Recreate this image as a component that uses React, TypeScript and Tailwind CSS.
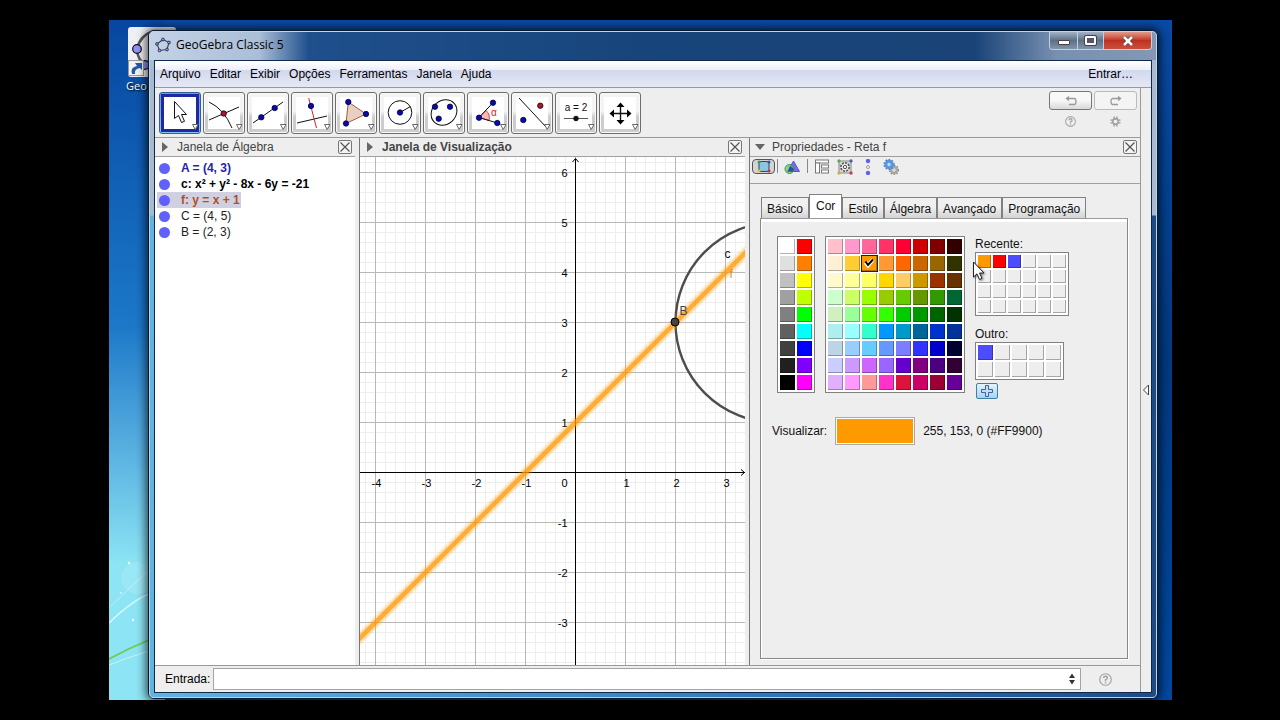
import type { ReactNode } from "react";
import clsx from "clsx";

const MENUS = ["Arquivo", "Editar", "Exibir", "Opções", "Ferramentas", "Janela", "Ajuda"];

const TABS = ["Básico", "Cor", "Estilo", "Álgebra", "Avançado", "Programação"];

const ALGEBRA = [
  { text: "A = (4, 3)", className: "font-bold text-[#2424a8]" },
  { text: "c: x² + y² - 8x - 6y = -21", className: "font-bold text-black" },
  { text: "f: y = x + 1", className: "font-bold text-[#b05020]", selected: true },
  { text: "C = (4, 5)", className: "text-[#222]" },
  { text: "B = (2, 3)", className: "text-[#222]" },
];

const BASE_COLORS = [
  "#ffffff", "#ff0000",
  "#e0e0e0", "#ff7f00",
  "#c0c0c0", "#ffff00",
  "#a0a0a0", "#bfff00",
  "#808080", "#00ff00",
  "#606060", "#00ffff",
  "#404040", "#0000ff",
  "#202020", "#7f00ff",
  "#000000", "#ff00ff",
];

const MAIN_COLORS = [
  "#ffc0cb", "#ff99cc", "#ff6699", "#ff3366", "#ff0033", "#cc0000", "#800000", "#330000",
  "#ffefd5", "#ffcc33", "#ff9900", "#ff9933", "#ff6600", "#cc6600", "#996600", "#333300",
  "#fffacd", "#ffff99", "#ffff66", "#ffd700", "#ffcc66", "#cc9900", "#993300", "#663300",
  "#ccffcc", "#ccff66", "#99ff00", "#99cc00", "#66cc00", "#669900", "#339900", "#006633",
  "#d0f0c0", "#99ff99", "#66ff00", "#33ff00", "#00cc00", "#009900", "#006400", "#003300",
  "#afeeee", "#99ffff", "#33ffcc", "#0099ff", "#0099cc", "#006699", "#0033cc", "#003399",
  "#bcd4e6", "#99ccff", "#66ccff", "#6699ff", "#7d7dff", "#3333ff", "#0000cc", "#000033",
  "#ccccff", "#cc99ff", "#cc66ff", "#9966ff", "#6600cc", "#800080", "#4b0082", "#330033",
  "#e0b0ff", "#ff99ff", "#ff9999", "#ff33cc", "#dc143c", "#cc0066", "#990033", "#660099",
];

const RECENT_COLORS = ["#ff9900", "#ff0000", "#4d4dff", ...Array(21).fill("#eeeeee")];
const OTHER_COLORS = ["#4d4dff", ...Array(9).fill("#eeeeee")];

function Dot({ x, y, color = "#0a0aa8" }: { x: number; y: number; color?: string }) {
  return <circle cx={x} cy={y} r="2.7" fill={color} stroke="#000040" strokeWidth="0.8" />;
}

const TOOLS: { name: string; icon: ReactNode }[] = [
  {
    name: "Mover",
    icon: <path d="M15.500 9.500V26.500L19.500 23.500L22.500 30.500L25.500 29.300L22.500 22.500H27.500Z" fill="#fff" />,
  },
  {
    name: "Interseção",
    icon: (
      <>
        <path d="M6 28L36 15M6 10Q21 17 29 36" />
        <Dot x={20.7} y={21.5} color="#b01818" />
      </>
    ),
  },
  {
    name: "Reta",
    icon: (
      <>
        <path d="M6 31L36 10" />
        <Dot x={14.3} y={25.3} />
        <Dot x={27.7} y={16} />
      </>
    ),
  },
  {
    name: "Reta Perpendicular",
    icon: (
      <>
        <path d="M6 31L36 24" />
        <path d="M17.700 6L25.500 36" stroke="#e02020" />
        <Dot x={20} y={14} />
      </>
    ),
  },
  {
    name: "Polígono",
    icon: (
      <>
        <path d="M13.300 10L31 22L11 31.500Z" fill="#e8cfc4" stroke="#a85a3c" />
        <Dot x={13.3} y={10} />
        <Dot x={31} y={22} />
        <Dot x={11} y={31.5} />
      </>
    ),
  },
  {
    name: "Círculo",
    icon: (
      <>
        <circle cx="21" cy="20.500" r="11.800" />
        <path d="M21 20.500L31.500 14.500" />
        <Dot x={21} y={20.5} />
      </>
    ),
  },
  {
    name: "Cônica",
    icon: (
      <>
        <ellipse cx="21" cy="20.500" rx="13.700" ry="11.800" transform="rotate(-42 21 20.500)" />
        <Dot x={12} y={14.7} />
        <Dot x={27} y={14.7} />
        <Dot x={15.7} y={26.7} />
      </>
    ),
  },
  {
    name: "Ângulo",
    icon: (
      <>
        <path d="M12 25.500L19 18.500A10 10 0 0 1 22 28.500Z" fill="#f8b8b8" stroke="#d84040" />
        <path d="M26 10.700L12 25.500L30.300 31" />
        <Dot x={12} y={25.7} />
        <Dot x={26} y={10.7} />
        <Dot x={30.3} y={31} />
        <text x="24" y="24" fontSize="10" fill="#d02020" stroke="none">α</text>
      </>
    ),
  },
  {
    name: "Reflexão",
    icon: (
      <>
        <path d="M8 6L35.500 35.500" />
        <Dot x={29.3} y={13.7} color="#b01818" />
        <Dot x={12.3} y={28} />
      </>
    ),
  },
  {
    name: "Controle Deslizante",
    icon: (
      <>
        <text x="21" y="19" fontSize="10" textAnchor="middle" fill="#111" stroke="none">a = 2</text>
        <path d="M9 26.500H33" stroke="#555" />
        <circle cx="21" cy="26.500" r="2.300" fill="#111" />
      </>
    ),
  },
  {
    name: "Mover Janela de Visualização",
    icon: (
      <>
        <path d="M13 21.500H30M21.500 13V30" strokeWidth="1.400" />
        <path
          d="M10.500 21.500L15 17.500V25.500ZM32.500 21.500L28 17.500V25.500ZM21.500 10.500L17.500 15H25.500ZM21.500 32.500L17.500 28H25.500Z"
          fill="#000"
          stroke="none"
        />
      </>
    ),
  },
];

function ToolButton({ name, icon, selected }: { name: string; icon: ReactNode; selected: boolean }) {
  return (
    <button
      type="button"
      aria-label={name}
      aria-pressed={selected}
      className={clsx(
        "h-[42px] w-[42px] rounded-[3px] border",
        selected
          ? "border-[#30609c] bg-linear-to-b from-[#6c9ccc] to-[#8ac4ee]"
          : "border-[#6e6e6e] bg-linear-to-b from-[#f4f4f4] from-45% to-[#cdcdcd] to-60% shadow-[inset_0_0_0_1px_#fafafa]"
      )}
    >
      <svg viewBox="1 1 40 40" className="block h-10 w-10" fill="none" stroke="#111" strokeWidth="1" fontFamily="Liberation Sans, sans-serif">
        {selected && <rect x="3.500" y="3.500" width="35" height="35" stroke="#2028a0" strokeWidth="3" />}
        <rect x="5" y="5" width="32" height="32" fill="#fff" stroke="none" />
        {icon}
        <path d="M33.500 32.500H39L36.200 37.500Z" fill="#fff" stroke="#666" />
      </svg>
    </button>
  );
}

function PanelHeader({ title, bold, open }: { title: string; bold?: boolean; open?: boolean }) {
  return (
    <div className="flex h-[19px] shrink-0 items-center border-b border-[#a0a0a0] bg-[#eee] pr-[3px] pl-[5px]">
      <svg viewBox="0 0 10 10" className="h-[10px] w-[10px]" fill="#666">
        {open ? <path d="M0 2H10L5 8Z" /> : <path d="M2 0L8 5L2 10Z" />}
      </svg>
      <h2 className={clsx("ml-[7px] flex-1 leading-4 text-[#444]", bold ? "font-bold" : "font-normal")}>{title}</h2>
      <button type="button" aria-label={`Fechar ${title}`} className="rounded-[2px] border border-[#777] bg-[#f4f4f4]">
        <svg viewBox="0 0 12 12" className="block h-3 w-3" stroke="#555" strokeWidth="1.200">
          <path d="M1.500 1.500L10.500 10.500M10.500 1.500L1.500 10.500" />
        </svg>
      </button>
    </div>
  );
}

function AlgebraView() {
  return (
    <section className="flex w-[204px] shrink-0 flex-col pr-1">
      <PanelHeader title="Janela de Álgebra" />
      <ul className="flex-1 bg-white pt-[3px] pl-[2px] leading-4">
        {ALGEBRA.map((row) => (
          <li key={row.text} className={clsx("flex w-fit items-center pr-px", row.selected && "bg-[#d0d0e0]")}>
            <button type="button" aria-label={`Mostrar ${row.text}`} className="mr-[11px] ml-[2px] h-[11px] w-[11px] rounded-full bg-[#6060ff]" />
            <span className={row.className}>{row.text}</span>
          </li>
        ))}
      </ul>
    </section>
  );
}

const UNIT = 50;
const OX = 215.5;
const OY = 315.5;

function GraphicsView() {
  const px = (x: number) => OX + x * UNIT;
  const py = (y: number) => OY - y * UNIT;

  return (
    <section className="flex min-w-0 flex-1 flex-col border-l border-[#777] pr-1">
      <PanelHeader title="Janela de Visualização" bold />
      <div className="relative min-h-[400px] flex-1 bg-white">
        <svg className="absolute inset-0 h-full w-full" fontFamily="Liberation Sans, sans-serif" fontSize="11">
          <defs>
            <pattern id="minor" x={OX - 0.5} y={OY - 0.5} width="10" height="10" patternUnits="userSpaceOnUse">
              <path d="M0.500 0V10M0 0.500H10" stroke="#eeeeee" />
            </pattern>
            <pattern id="major" x={OX - 0.5} y={OY - 0.5} width="50" height="50" patternUnits="userSpaceOnUse">
              <path d="M0.500 0V50M0 0.500H50" stroke="#b9b9b9" />
            </pattern>
          </defs>
          <rect width="100%" height="100%" fill="url(#minor)" />
          <rect width="100%" height="100%" fill="url(#major)" />

          <g stroke="#000" fill="none">
            <line x1="0" y1={OY} x2="100%" y2={OY} />
            <line x1={OX} y1="2" x2={OX} y2="100%" />
            <path d={`M${OX - 3} 5L${OX} 1.500L${OX + 3} 5`} />
            <svg x="100%" y={OY} overflow="visible">
              <path d="M-4 -3L-0.500 0L-4 3" />
            </svg>
          </g>

          <g textAnchor="middle">
            {[-4, -3, -2, -1, 1, 2, 3].map((n) => (
              <text key={n} x={px(n) + 1} y={OY + 14}>{n}</text>
            ))}
          </g>
          <g textAnchor="end">
            {[6, 5, 4, 3, 2, 1, -1, -2, -3].map((n) => (
              <text key={n} x={OX - 8} y={py(n) + 4}>{n}</text>
            ))}
            <text x={OX - 8} y={OY + 14}>0</text>
          </g>

          <circle cx={px(4)} cy={py(3)} r={2 * UNIT} fill="none" stroke="#4d4d4d" strokeWidth="2.400" />
          <g stroke="#ff9900">
            <line x1={px(-6)} y1={py(-5)} x2={px(16)} y2={py(17)} strokeWidth="11" opacity="0.150" />
            <line x1={px(-6)} y1={py(-5)} x2={px(16)} y2={py(17)} strokeWidth="8" opacity="0.180" />
            <line x1={px(-6)} y1={py(-5)} x2={px(16)} y2={py(17)} strokeWidth="4.500" opacity="0.700" />
          </g>
          <circle cx={px(2) - 0.5} cy={py(3) - 0.5} r="4" fill="#444" stroke="#000" />
          <g fontSize="12">
            <text x={px(2) + 4} y={py(3) - 8} fill="#444">B</text>
            <text x={px(3) - 1} y={py(4) - 15} fill="#111">c</text>
            <text x={px(3) + 4} y={py(4) + 5} fill="#e09020">f</text>
          </g>
        </svg>
      </div>
    </section>
  );
}

interface PaletteProps {
  label: string;
  colors: string[];
  columns: string;
  cell: string;
  selected?: string;
}

function Palette({ label, colors, columns, cell, selected }: PaletteProps) {
  return (
    <div role="group" aria-label={label} className={clsx("grid w-fit gap-[2px] border border-[#808080] bg-white p-[2px]", columns)}>
      {colors.map((color, i) => (
        <button
          key={i}
          type="button"
          aria-label={`${label} ${i + 1}`}
          className={clsx(
            "shadow-[inset_-1px_-1px_0_rgba(0,0,0,0.3)]",
            cell,
            color === selected && "outline outline-[#222]"
          )}
          style={{ backgroundColor: color }}
        >
          {color === selected && (
            <svg viewBox="0 0 15 15" className="block h-full w-full" fill="none">
              <path d="M3.500 6.500L6 9.500L11 3.500" stroke="#fff" strokeWidth="4" />
              <path d="M3.500 5.500L6 9L11 3.500" stroke="#000" strokeWidth="2" />
            </svg>
          )}
        </button>
      ))}
    </div>
  );
}

function PropertiesToolbar() {
  return (
    <div className="flex h-[27px] shrink-0 items-start border-b border-[#a0a0a0] pt-[2px] pl-[2px]">
      <button type="button" aria-label="Objetos" className="flex h-[15px] w-[23px] items-center justify-center rounded-[4px] border border-[#555] bg-[#d4d4d4]">
        <svg viewBox="0 0 14 13" className="h-[13px] w-[14px]">
          <rect x="2" y="1.500" width="10" height="10" rx="2" fill="#8cc4e4" stroke="#345" />
          <circle cx="2" cy="2" r="1.500" fill="#3a9a4a" />
          <circle cx="12" cy="2" r="1.500" fill="#3050b0" />
          <circle cx="2" cy="11" r="1.500" fill="#e0c030" />
          <circle cx="12" cy="11" r="1.500" fill="#c03030" />
        </svg>
      </button>
      <span className="mx-[2px] h-[14px] w-px bg-[#888]" />
      <button type="button" aria-label="Padrões" className="ml-1">
        <svg viewBox="0 0 16 16" className="block h-4 w-4">
          <path d="M9.500 2L15.500 12.500H3.500Z" fill="#7a6cf0" stroke="#5a50d8" />
          <circle cx="5.500" cy="10" r="4.500" fill="#4cb85c" fillOpacity="0.600" stroke="#3c9c4c" />
          <path d="M6 7L10 10L9 12.500H4Z" fill="#2c5098" />
        </svg>
      </button>
      <span className="mr-[7px] ml-[7px] h-[14px] w-px bg-[#888]" />
      <button type="button" aria-label="Layout">
        <svg viewBox="0 0 14 14" className="block h-[15px] w-[14px]" fill="#fff" stroke="#777">
          <rect x="0.500" y="0.500" width="13" height="3" />
          <rect x="0.500" y="3.500" width="4" height="10" />
          <rect x="6.500" y="5.500" width="7" height="3" />
          <rect x="6.500" y="10.500" width="7" height="3" />
        </svg>
      </button>
      <button type="button" aria-label="Configurações de objeto" className="ml-2">
        <svg viewBox="0 0 16 16" className="block h-4 w-4" fill="none">
          <path d="M2 2H14V14H2Z" fill="#ddd" stroke="#888" />
          <circle cx="8" cy="8" r="4.200" fill="#eee" stroke="#555" strokeWidth="1.600" strokeDasharray="2.200 1" />
          <circle cx="8" cy="8" r="1.700" stroke="#555" />
          <circle cx="2" cy="2" r="1.700" fill="#58a860" />
          <circle cx="14" cy="2" r="1.700" fill="#5060a8" />
          <circle cx="2" cy="14" r="1.700" fill="#c8b048" />
          <circle cx="14" cy="14" r="1.700" fill="#b84848" />
        </svg>
      </button>
      <button type="button" aria-label="Janela de Álgebra" className="ml-3">
        <svg viewBox="0 0 6 16" className="block h-4 w-[6px]">
          <circle cx="3" cy="2" r="2.200" fill="#6060e8" />
          <circle cx="3" cy="8" r="1.500" fill="#fff" stroke="#999" />
          <circle cx="3" cy="14" r="2.200" fill="#6060e8" />
        </svg>
      </button>
      <button type="button" aria-label="Avançado" className="ml-3">
        <svg viewBox="0 0 16 16" className="block h-4 w-4" fill="none">
          <circle cx="11" cy="11" r="3" fill="#ddd" stroke="#a8a8a8" strokeWidth="2.500" />
          <circle cx="11" cy="11" r="4.600" stroke="#8c8c8c" strokeWidth="1.200" strokeDasharray="1.500 1.500" />
          <circle cx="6" cy="5.500" r="3.200" fill="#c4dcf8" stroke="#5c96dc" strokeWidth="3" />
          <circle cx="6" cy="5.500" r="5" stroke="#4880cc" strokeWidth="1.200" strokeDasharray="1.700 1.500" />
        </svg>
      </button>
    </div>
  );
}

function PropertiesView() {
  return (
    <section className="flex w-[391px] shrink-0 flex-col border-l border-[#777]">
      <PanelHeader title="Propriedades - Reta f" open />
      <PropertiesToolbar />
      <div className="flex flex-1 flex-col pt-[10px] pr-3 pb-[6px] pl-[10px] text-[#111]">
        <div role="tablist" className="flex items-end pl-px">
          {TABS.map((tab) => (
            <button
              key={tab}
              type="button"
              role="tab"
              aria-selected={tab === "Cor"}
              className={clsx(
                "border border-b-0 border-[#808080] leading-4",
                tab === "Cor"
                  ? "bg-white px-[6px] pt-[3px] pb-1"
                  : "bg-linear-to-b from-[#f0f0f0] from-45% to-[#d4d4d4] px-[5px] pt-[3px] pb-px"
              )}
            >
              {tab}
            </button>
          ))}
        </div>
        <div className="flex-1 border border-[#888] border-t-[#999] bg-[#eee] px-4 pt-[17px] shadow-[inset_1px_3px_0_#fff,1px_1px_0_#fff]">
          <div className="flex items-start gap-[10px]">
            <Palette label="Básica" colors={BASE_COLORS} columns="grid-cols-[15px_15px]" cell="h-[15px]" />
            <Palette label="Cor" colors={MAIN_COLORS} columns="grid-cols-[repeat(8,15px)]" cell="h-[15px]" selected="#ff9900" />
            <div className="leading-4">
              <p>Recente:</p>
              <div className="relative">
                <Palette label="Recente" colors={RECENT_COLORS} columns="grid-cols-[repeat(6,13px)]" cell="h-[13px]" />
                <svg viewBox="0 0 14 20" className="absolute top-[9px] -left-[3px] h-5 w-[14px] drop-shadow-[1px_1px_1px_rgba(0,0,0,0.5)]">
                  <path d="M1.500 1V16L5 12.800L7.500 18.500L10 17.300L7.500 12H12Z" fill="#fff" stroke="#222" />
                </svg>
              </div>
              <p className="mt-[10px]">Outro:</p>
              <Palette label="Outro" colors={OTHER_COLORS} columns="grid-cols-[repeat(5,15px)]" cell="h-[15px]" />
              <button
                type="button"
                aria-label="Adicionar cor"
                className="mt-[3px] ml-px flex h-4 w-[22px] items-center justify-center rounded-[2px] border border-[#4080a8] bg-linear-to-b from-[#e4f4fd] to-[#a4d4f0]"
              >
                <svg viewBox="0 0 12 12" className="h-3 w-3">
                  <path d="M4.500 0.500H7.500V4.500H11.500V7.500H7.500V11.500H4.500V7.500H0.500V4.500H4.500Z" fill="#c4dcf4" stroke="#3c64a0" />
                </svg>
              </button>
            </div>
          </div>
          <div className="-ml-[5px] flex items-center gap-2 pt-[18px]">
            <span>Visualizar:</span>
            <span className="h-7 w-20 border border-[#aaa] bg-[#ff9900] shadow-[inset_0_0_0_1px_#fff]" />
            <span>255, 153, 0 (#FF9900)</span>
          </div>
        </div>
      </div>
    </section>
  );
}

function TitleBar() {
  return (
    <header className="flex h-7 items-start justify-between">
      <div className="flex items-center pt-[5px] pl-[5px]">
        <svg viewBox="0 0 16 16" className="h-4 w-4" fill="none" stroke="#345" strokeWidth="1.100">
          <path d="M8 2.500L14 5.500L12 12.500L4.500 13.500L2 7Z" />
          <g fill="#9898f0" stroke="#224" strokeWidth="0.800">
            <circle cx="8" cy="2.500" r="1.400" />
            <circle cx="14" cy="5.500" r="1.400" />
            <circle cx="12" cy="12.500" r="1.400" />
            <circle cx="4.500" cy="13.500" r="1.400" />
            <circle cx="2" cy="7" r="1.400" />
          </g>
        </svg>
        <h1 className="ml-[5px] font-['Open_Sans',sans-serif] text-[12px] leading-4 text-black">GeoGebra Classic 5</h1>
      </div>
      <div className="mr-1 flex h-[18px] overflow-hidden rounded-b-[4px] border border-t-0 border-[#c4d0e0]">
        <button type="button" aria-label="Minimizar" className="flex w-7 items-center justify-center border-r border-[#c4d0e0] bg-linear-to-b from-[#a4b2c4] via-[#5c7088] to-[#8094ac]">
          <span className="mt-1 h-[5px] w-3 rounded-[1px] border border-[#444] bg-white" />
        </button>
        <button type="button" aria-label="Maximizar" className="flex w-[26px] items-center justify-center border-r border-[#c4d0e0] bg-linear-to-b from-[#a4b2c4] via-[#5c7088] to-[#8094ac]">
          <span className="h-[9px] w-[11px] rounded-[1px] border-2 border-white bg-[#556] outline outline-[#444]" />
        </button>
        <button type="button" aria-label="Fechar" className="flex w-[47px] items-center justify-center bg-linear-to-b from-[#e09a8c] via-[#c03020] to-[#c85038]">
          <svg viewBox="0 0 12 10" className="h-[10px] w-3" fill="none">
            <path d="M2 1L10 9M10 1L2 9" stroke="#444" strokeWidth="4" />
            <path d="M2 1L10 9M10 1L2 9" stroke="#fff" strokeWidth="2.500" />
          </svg>
        </button>
      </div>
    </header>
  );
}

function MenuBar() {
  return (
    <nav className="flex h-[27px] shrink-0 items-center gap-[9px] border-b border-[#999] bg-[linear-gradient(to_bottom,#fff,#eef0f9_34%,#d3d9ed_36%,#e4e8f6)] pl-[5px] text-black">
      {MENUS.map((menu) => (
        <button key={menu} type="button">{menu}</button>
      ))}
      <button type="button" className="mr-[18px] ml-auto">Entrar…</button>
    </nav>
  );
}

function ToolBar() {
  return (
    <div className="flex h-[50px] shrink-0 justify-between border-b border-[#999] pt-1 pr-[3px] pl-1">
      <div className="flex gap-[2px]">
        {TOOLS.map((tool, i) => (
          <ToolButton key={tool.name} name={tool.name} icon={tool.icon} selected={i === 0} />
        ))}
      </div>
      <div className="-mt-px grid h-fit grid-cols-[43px_43px] gap-x-[2px] gap-y-1">
        <button type="button" aria-label="Desfazer" className="flex h-[19px] items-center justify-center rounded-[3px] border border-[#777] bg-linear-to-b from-[#f8f8f8] from-50% to-[#d8d8d8]">
          <svg viewBox="0 0 12 10" className="h-[10px] w-3" fill="none" stroke="#999" strokeWidth="1.300">
            <path d="M1.500 2.500H9Q11 2.500 11 5.500T9 8.500H4M4 0.500L1.500 2.500L4 4.500" />
          </svg>
        </button>
        <button type="button" aria-label="Refazer" className="flex h-[19px] items-center justify-center rounded-[3px] border border-[#bbb] bg-[#f4f4f4]">
          <svg viewBox="0 0 12 10" className="h-[10px] w-3" fill="none" stroke="#999" strokeWidth="1.300">
            <path d="M10.500 2.500H3Q1 2.500 1 5.500T3 8.500H8M8 0.500L10.500 2.500L8 4.500" />
          </svg>
        </button>
        <button type="button" aria-label="Ajuda" className="flex h-[14px] items-center justify-center">
          <HelpIcon className="h-[11px] w-[11px]" />
        </button>
        <button type="button" aria-label="Configurações" className="flex h-[14px] items-center justify-center">
          <svg viewBox="0 0 12 12" className="h-[11px] w-[11px]" fill="none" stroke="#999" strokeWidth="1.500">
            <circle cx="6" cy="6" r="3" />
            <path d="M4.500 0.500V3M7.500 0.500V3M4.500 9V11.500M7.500 9V11.500M0.500 4.500H3M0.500 7.500H3M9 4.500H11.500M9 7.500H11.500" />
          </svg>
        </button>
      </div>
    </div>
  );
}

function HelpIcon({ className }: { className: string }) {
  return (
    <svg viewBox="0 0 14 14" className={className} fill="none" stroke="#a4a4a4" strokeWidth="1.300">
      <circle cx="7" cy="7" r="6.200" />
      <path d="M5 5.500Q5 3.500 7 3.500T9 5.300Q9 6.300 7 7.500V8.500M7 9.500V11" strokeWidth="1.600" />
    </svg>
  );
}

function InputBar() {
  return (
    <div className="flex h-[27px] shrink-0 items-center border-t border-[#999] pl-[10px]">
      <label htmlFor="entrada" className="text-black">Entrada:</label>
      <div className="relative ml-[3px] flex-1">
        <input id="entrada" type="text" className="block h-[22px] w-full border border-[#a4a4a4] bg-white px-1 outline-none" />
        <svg viewBox="0 0 6 12" className="absolute top-[5px] right-[6px] h-3 w-[6px]" fill="#333">
          <path d="M0 5L3 0.500L6 5ZM0 7L3 11.500L6 7Z" />
        </svg>
      </div>
      <button type="button" aria-label="Ajuda de entrada" className="mr-7 ml-[18px]">
        <HelpIcon className="block h-[13px] w-[13px]" />
      </button>
    </div>
  );
}

function Wallpaper() {
  return (
    <>
      <div className="absolute inset-y-0 left-0 w-14 bg-linear-to-b from-[#0846a0] via-[#1c78c8] via-45% to-[#8ce4f4] to-80%">
        <svg viewBox="0 0 40 140" className="absolute bottom-0 left-0 h-[140px] w-10" fill="none">
          <circle cx="28" cy="18" r="16" fill="#fff" opacity="0.120" />
          <path d="M0 63Q24 40 40 34" stroke="#e8ffff" strokeWidth="1.500" opacity="0.800" />
          <path d="M0 48Q18 30 40 10" stroke="#fff" opacity="0.400" />
          <path d="M0 99Q20 88 40 80" stroke="#70cc50" strokeWidth="1.800" />
          <path d="M0 105Q20 97 40 91" stroke="#e8f8e8" opacity="0.700" />
          <g fill="#fff">
            <circle cx="20" cy="3" r="1.200" />
            <circle cx="24" cy="60" r="1.200" />
            <circle cx="12" cy="33" r="0.800" />
          </g>
        </svg>
      </div>
      <a href="#geogebra" className="absolute top-[7px] left-[17px] block text-white">
        <svg viewBox="0 0 48 50" className="ml-[2px] block h-[50px] w-12" fill="none">
          <rect width="48" height="50" rx="3" fill="#f0f0f4" />
          <path d="M9 22Q12 8 26 4M9 22Q9 32 18 39" stroke="#555" strokeWidth="2.500" />
          <circle cx="9" cy="22" r="4.300" fill="#9090f8" stroke="#111" strokeWidth="1.200" />
          <circle cx="17" cy="38" r="4.300" fill="#9090f8" stroke="#111" strokeWidth="1.200" />
          <rect x="0.500" y="33.500" width="15" height="15" fill="#f4f4f4" stroke="#999" />
          <path d="M4 47Q2 40 9 39L7 36H14V43L12 41Q6 42 7 47Z" fill="#245ca4" />
        </svg>
        <span className="block font-['Open_Sans',sans-serif] text-[11px] leading-[18px] [text-shadow:1px_1px_2px_#000]">Geo</span>
      </a>
    </>
  );
}

export default function App() {
  return (
    <div className="flex min-h-screen bg-black py-5 pr-[108px] pl-[109px] font-['Liberation_Sans',Arial,sans-serif] text-xs">
      <main className="relative flex flex-1 overflow-hidden bg-linear-to-b from-[#0a4aa4] via-[#003a80] to-[#0048a0] pt-[10px] pr-[14px] pb-px pl-[39px]">
        <Wallpaper />
        <div className="relative flex flex-1 flex-col rounded-[6px] border border-[#0a1830] bg-[linear-gradient(to_right,#c4d2e6_0,#aabed8_110px,#1f4f8c_160px,#17447a_50%,#1a4478_82%,#7890b0_90%,#8298b4_100%)] shadow-[0_0_10px_2px_rgba(0,0,0,0.7)]">
          <div className="flex flex-1 flex-col rounded-[5px] border border-[#c0d4e8]">
            <TitleBar />
            <div className="flex flex-1 flex-col rounded-b-[4px] bg-[linear-gradient(to_bottom,#a8bad0_0,#a8bad0_155px,transparent_156px),linear-gradient(to_right,#60b4e0,#3c90cc_40%,#2470b8_70%,#1c4c88)] px-1 pb-1">
              <div className="flex flex-1 flex-col border border-[#10284c] bg-[#eee]">
                <MenuBar />
                <div className="flex flex-1">
                  <div className="flex min-w-0 flex-1 flex-col">
                    <ToolBar />
                    <div className="flex flex-1">
                      <AlgebraView />
                      <GraphicsView />
                      <PropertiesView />
                    </div>
                    <InputBar />
                  </div>
                  <button type="button" aria-label="Mostrar barra lateral" className="flex w-[11px] shrink-0 items-center justify-center border-l border-[#999]">
                    <svg viewBox="0 0 6 12" className="h-3 w-[6px]" fill="#fff" stroke="#444">
                      <path d="M5.500 1V11L0.500 6Z" />
                    </svg>
                  </button>
                </div>
              </div>
            </div>
          </div>
        </div>
      </main>
    </div>
  );
}
